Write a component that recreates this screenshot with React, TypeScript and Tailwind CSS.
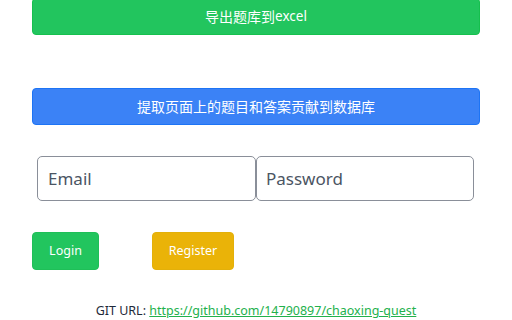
export default function App() {
  return (
    <div
      className="w-[512px] h-[320px] overflow-hidden bg-white px-8"
      style={{ fontFamily: '"Noto Sans", "Noto Sans CJK SC", sans-serif' }}
    >
      <button className="mt-[-2px] flex h-[37px] w-full items-center justify-center rounded-[4px] border border-[#16c04e] bg-[#22c55e] text-[14px] text-white">
        导出题库到<span className="text-[13.5px]">excel</span>
      </button>

      <button className="mt-[53px] flex h-[37px] w-full items-center justify-center rounded-[4px] border border-[#1d74f5] bg-[#3b82f6] text-[14px] text-white">
        提取页面上的题目和答案贡献到数据库
      </button>

      <div className="mt-[31px] flex pl-[5px] pr-[6px]">
        <input
          type="email"
          placeholder="Email"
          className="h-[45px] w-[219px] min-w-0 rounded-[5px] border border-[#8a8f99] px-[10px] text-[17px] text-gray-700 placeholder:text-[#4b5563] outline-none"
        />
        <input
          type="password"
          placeholder="Password"
          className="h-[45px] min-w-0 flex-1 rounded-[5px] border border-[#8a8f99] px-[9px] text-[17px] text-gray-700 placeholder:text-[#4b5563] outline-none"
        />
      </div>

      <div className="mt-[31px] flex gap-[53px]">
        <button className="flex h-[38px] w-[67px] items-center justify-center rounded-[4px] border border-[#1fbf58] bg-[#22c55e] text-[12.5px] text-white">
          Login
        </button>
        <button className="flex h-[38px] w-[82px] items-center justify-center rounded-[4px] border border-[#e3b00a] bg-[#eab308] text-[12.5px] text-white">
          Register
        </button>
      </div>

      <p className="mt-[32px] text-center text-[12.5px] text-gray-800">
        GIT URL:{" "}
        <a href="#" className="text-[#22b14c] underline">
          https://github.com/14790897/chaoxing-quest
        </a>
      </p>
    </div>
  );
}
